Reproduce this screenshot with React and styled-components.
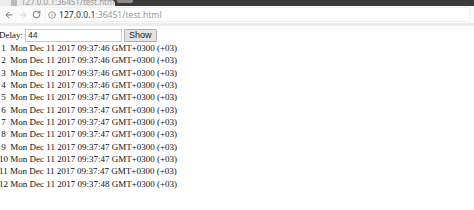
import * as React from 'react'
import styled, { createGlobalStyle } from 'styled-components'
import { ArrowLeft, ArrowRight, RotateCw, Info } from 'lucide-react'

const GlobalStyle = createGlobalStyle`
    html, body {
        margin: 0;
        padding: 0;
        background: #fff;
    }
`

const rows = [
    '09:37:46', '09:37:46', '09:37:46', '09:37:46', '09:37:47', '09:37:47',
    '09:37:47', '09:37:47', '09:37:47', '09:37:47', '09:37:47', '09:37:48',
]

/* browser frame */
const Window = styled.div`
    width: 474px;
    height: 210px;
    overflow: hidden;
    background: #fff;
`
const TabStrip = styled.div`
    display: flex;
    align-items: flex-end;
    height: 6px;
    background: #3c3b37;
    overflow: hidden;
`
const Tab = styled.div`
    display: flex;
    align-items: flex-end;
    gap: 4px;
    width: 104px;
    height: 6px;
    padding-left: 11px;
    background: #ececec;
    border-radius: 0 4px 0 0;
    font: 8px 'Noto Sans', sans-serif;
    color: #999;
    line-height: 9px;
    white-space: nowrap;
    overflow: hidden;
`
const Favicon = styled.span`
    flex: none;
    width: 6px;
    height: 8px;
    background: #bbb;
`
const NewTab = styled.div`
    align-self: flex-start;
    width: 16px;
    height: 3px;
    margin-left: 2px;
    background: #8d8c88;
    border-radius: 0 0 2px 2px;
`
const Toolbar = styled.div`
    display: flex;
    align-items: center;
    height: 17px;
    padding: 0 4px 0 2px;
    background: #fafafa;
    border-bottom: 3px solid #ececec;
`
const NavButton = styled.div`
    display: flex;
    align-items: center;
    justify-content: center;
    width: 13px;
    height: 13px;
    margin-right: ${p => p.$gap || 1}px;
    color: ${p => (p.$disabled ? '#cfcfcf' : '#5f6368')};
`
const Omnibox = styled.div`
    flex: 1;
    display: flex;
    align-items: center;
    gap: 3px;
    height: 13px;
    padding-left: 2px;
    background: #fff;
    border: 1px solid #f0f0f0;
    border-radius: 2px;
    font: 8.6px 'Noto Sans', sans-serif;
    color: #999;
`
const Host = styled.span`
    color: #333;
`

/* page content */
const Page = styled.div`
    padding: 2px 0 0 0;
    margin-left: -1px;
    font: 9px 'Liberation Serif', serif;
    color: #111;
`
const Form = styled.div`
    display: flex;
    align-items: center;
    height: 14px;
`
const Label = styled.span`
    margin-right: 2px;
`
const Field = styled.span`
    display: flex;
    flex: 0 0 97px;
    width: 97px;
`
const Input = styled.input`
    flex: 1;
    width: 100%;
    height: 13px;
    box-sizing: border-box;
    margin: 0;
    padding: 0 2px;
    border: 1px solid #c9c9c9;
    font: 8.6px 'Liberation Sans', sans-serif;
    color: #222;
    outline: none;
`
const Button = styled.button`
    flex: none;
    height: 13px;
    margin: 0 0 0 2px;
    padding: 0 4px;
    box-sizing: border-box;
    border: 1px solid #b0b0b0;
    border-radius: 1px;
    background: #e3e3e3;
    font: 9px 'Liberation Sans', sans-serif;
    color: #222;
    line-height: 11px;
`
const List = styled.div`
    display: flex;
    flex-direction: column;
`
const Row = styled.div`
    height: 12.35px;
    line-height: 12.35px;
    white-space: pre;
`

export default function App() {
    return (
        <Window>
            <GlobalStyle />
            <TabStrip>
                <Tab><Favicon /><span>127.0.0.1:36451/test.html</span></Tab>
                <NewTab />
            </TabStrip>
            <Toolbar>
                <NavButton><ArrowLeft size={10} strokeWidth={2} /></NavButton>
                <NavButton $disabled><ArrowRight size={10} strokeWidth={2} /></NavButton>
                <NavButton $gap={2}><RotateCw size={9} strokeWidth={2.2} /></NavButton>
                <Omnibox>
                    <Info size={8} strokeWidth={2} color="#666" />
                    <span><Host>127.0.0.1</Host>:36451/test.html</span>
                </Omnibox>
            </Toolbar>
            <Page>
                <Form>
                    <Label>Delay:</Label>
                    <Field><Input defaultValue="44" /></Field>
                    <Button>Show</Button>
                </Form>
                <List>
                    {rows.map((t, i) => (
                        <Row key={i}>
                            {(i < 9 ? ' ' + (i + 1) + '  ' : (i + 1) + ' ') + `Mon Dec 11 2017 ${t} GMT+0300 (+03)`}
                        </Row>
                    ))}
                </List>
            </Page>
        </Window>
    )
}
